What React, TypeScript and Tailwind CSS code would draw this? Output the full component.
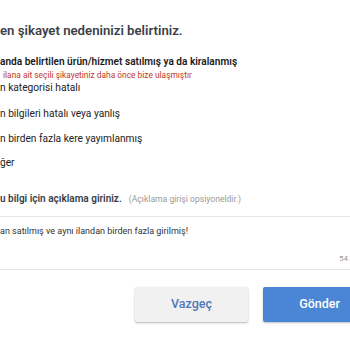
export default function App() {
  return (
    <div className="w-[350px] h-[350px] overflow-hidden bg-white font-['Roboto',sans-serif] text-[#222]">
      <h2 className="pt-[21px] h-[41px] text-[13.2px] leading-5 font-semibold text-[#3a3f48] whitespace-nowrap">
        en şikayet nedeninizi belirtiniz.
      </h2>

      <div className="mt-[14px] flex flex-col whitespace-nowrap">
        <div>
          <div className="text-[10.1px] leading-[14px] font-semibold text-[#1a1a1a]">
            anda belirtilen ürün/hizmet satılmış ya da kiralanmış
          </div>
          <div className="pl-[3px] text-[8.4px] leading-3 text-[#c0392b]">
            ilana ait seçili şikayetiniz daha önce bize ulaşmıştır
          </div>
        </div>
        <div className="text-[10.2px] leading-[14px] text-[#222]">n kategorisi hatalı</div>
        <div className="mt-3 text-[10.2px] leading-[14px] text-[#222]">n bilgileri hatalı veya yanlış</div>
        <div className="mt-[11px] text-[10.2px] leading-[14px] text-[#222]">n birden fazla kere yayımlanmış</div>
        <div className="mt-[10px] text-[10.2px] leading-[14px] text-[#222]">ğer</div>
      </div>

      <div className="mt-[22px] flex items-baseline gap-[7px] whitespace-nowrap">
        <span className="text-[10px] leading-[14px] font-semibold text-[#3a3f48]">
          u bilgi için açıklama giriniz.
        </span>
        <span className="text-[8.6px] text-[#999]">(Açıklama girişi opsiyoneldir.)</span>
      </div>

      <div className="mt-[10px] border-y border-[#e6e6e6] h-[54px] flex flex-col">
        <p className="pt-[8px] text-[9px] leading-3 text-[#333] whitespace-nowrap">
          an satılmış ve aynı ilandan birden fazla girilmiş!
        </p>
        <span className="mt-auto mb-[4px] self-end pr-[2px] text-[8px] leading-3 text-[#999]">54</span>
      </div>

      <div className="mt-[17px] flex gap-[15px] pl-[135px]">
        <button className="shrink-0 w-[113px] h-[35px] rounded-[2px] bg-[#f1f1f1] shadow-[0_1px_2px_rgba(0,0,0,0.3)] text-[12.5px] font-medium text-[#4f78b8]">
          Vazgeç
        </button>
        <button className="shrink-0 w-[113px] h-[35px] rounded-[2px] bg-[#4a86d5] shadow-[0_1px_2px_rgba(0,0,0,0.25)] text-[12.5px] font-medium text-white">
          Gönder
        </button>
      </div>
    </div>
  );
}
